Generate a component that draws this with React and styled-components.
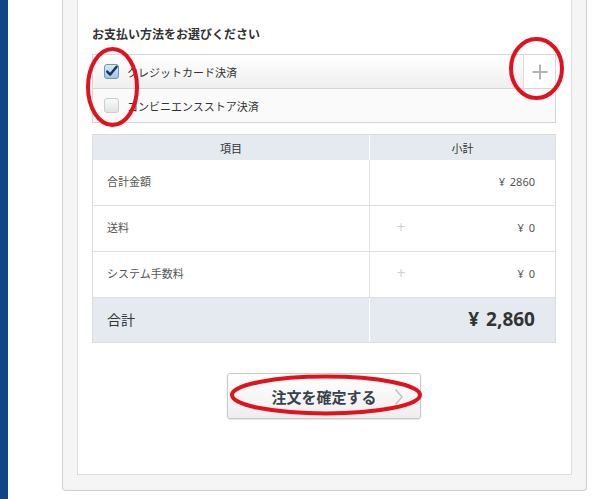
import React from 'react'
import styled, { createGlobalStyle } from 'styled-components'

const Global = createGlobalStyle`
  html, body {
    margin: 0;
    padding: 0;
    background: #fff;
  }
  body {
    font-family: "Noto Sans CJK JP", "Noto Sans", sans-serif;
    color: #333;
  }
`

const Page = styled.div`
  position: relative;
  display: flex;
  height: 499px;
  overflow: hidden;
`

const SideBar = styled.div`
  width: 8px;
  flex: none;
  background: #0d4586;
`

const Main = styled.div`
  padding-left: 54px;
`

const OuterPanel = styled.div`
  box-sizing: border-box;
  width: 525px;
  border: 1px solid #cfcfcf;
  border-top: none;
  border-radius: 0 0 4px 4px;
  background: #f5f5f5;
  padding: 0 14px 15px;
`

const InnerPanel = styled.div`
  border: 1px solid #dcdcdc;
  border-top: none;
  background: #fff;
  padding: 27px 15px 55px 14px;
`

const Heading = styled.div`
  font-size: 12px;
  line-height: 14px;
  font-weight: bold;
  color: #333;
  margin-bottom: 13px;
`

const PayBox = styled.div`
  border: 1px solid #d6d6d6;
`

const PayRow = styled.div`
  display: flex;
  align-items: center;
  height: 33px;
  background: ${p => (p.$raised ? 'linear-gradient(#ffffff, #efefef)' : '#fafafa')};
  border-top: ${p => (p.$first ? 'none' : '1px solid #d6d6d6')};
`

const PayLabel = styled.label`
  display: flex;
  align-items: center;
  gap: 7px;
  flex: 1;
  padding-left: 10px;
  font-size: 11px;
  color: #333;
`

const AddButton = styled.div`
  width: 31px;
  align-self: stretch;
  display: flex;
  align-items: center;
  justify-content: center;
  border-left: 1px solid #dcdcdc;
  background: #fff;
`

const Table = styled.div`
  margin-top: 11px;
  border: 1px solid #dcdcdc;
  display: grid;
  grid-template-columns: 276px 1fr;
`

const Cell = styled.div`
  display: flex;
  align-items: center;
  height: ${p => p.$h}px;
  background: ${p => (p.$shade ? '#e5eaf0' : '#fff')};
  border-bottom: ${p => (p.$line ? '1px solid #dedede' : 'none')};
  border-left: ${p => (p.$right ? `1px solid ${p.$shade ? '#fff' : '#e2e2e2'}` : 'none')};
  justify-content: ${p => p.$align || 'flex-start'};
  padding: 0 ${p => (p.$right ? 20 : 0)}px 3px ${p => (p.$right ? 0 : 14)}px;
  box-sizing: border-box;
  font-size: ${p => p.$size || 11}px;
  font-weight: ${p => (p.$bold ? 'bold' : 'normal')};
  color: ${p => (p.$dark ? '#333' : '#555')};
`

const HeadCell = styled.div`
  height: 25px;
  display: flex;
  align-items: center;
  justify-content: center;
  background: #e5eaf0;
  font-size: 11px;
  color: #333;
  border-left: ${p => (p.$right ? '1px solid #fff' : 'none')};
`

const Plus = styled.span`
  margin-left: 26px;
  margin-right: auto;
  color: #cfcfcf;
  font-size: 12px;
  font-family: "DejaVu Sans", sans-serif;
`

const Amount = styled.span`
  font-family: "Noto Sans", "Noto Sans CJK JP", sans-serif;
  word-spacing: 2px;
`

const ButtonWrap = styled.div`
  display: flex;
  justify-content: center;
  margin-top: 30px;
`

const ConfirmButton = styled.button`
  position: relative;
  box-sizing: border-box;
  width: 194px;
  height: 46px;
  border: 1px solid #c9c9c9;
  border-radius: 3px;
  background: linear-gradient(#ffffff, #eeeeee);
  box-shadow: 0 1px 2px rgba(0, 0, 0, 0.12);
  font-family: "Noto Sans CJK JP", sans-serif;
  font-size: 15px;
  font-weight: bold;
  color: #39414d;
  display: flex;
  align-items: center;
  justify-content: center;
  padding: 0;
`

const Chevron = styled.svg`
  position: absolute;
  right: 16px;
  top: 14px;
`

const Marks = styled.svg`
  position: absolute;
  left: 0;
  top: 0;
  pointer-events: none;
`

function CheckBox({ checked }) {
  return (
    <svg width="17" height="17" viewBox="0 0 17 17">
      <defs>
        <linearGradient id="cbOn" x1="0" y1="0" x2="0" y2="1">
          <stop offset="0" stopColor="#dbeaf8" />
          <stop offset="1" stopColor="#9fc4e8" />
        </linearGradient>
        <linearGradient id="cbOff" x1="0" y1="0" x2="0" y2="1">
          <stop offset="0" stopColor="#fbfbfb" />
          <stop offset="1" stopColor="#e2e2e2" />
        </linearGradient>
      </defs>
      <rect
        x="1.5"
        y="1.5"
        width="14"
        height="14"
        rx="2.5"
        fill={checked ? 'url(#cbOn)' : 'url(#cbOff)'}
        stroke={checked ? '#7295bb' : '#cdcdcd'}
      />
      {checked && (
        <path d="M4.2 8.6 L7.2 11.6 L13.6 3.8" fill="none" stroke="#1c3556" strokeWidth="2.4" strokeLinecap="round" strokeLinejoin="round" />
      )}
    </svg>
  )
}

const rows = [
  { label: '合計金額', value: '¥ 2860', plus: false },
  { label: '送料', value: '¥ 0', plus: true },
  { label: 'システム手数料', value: '¥ 0', plus: true },
]

export default function App() {
  return (
    <Page>
      <Global />
      <SideBar />
      <Main>
        <OuterPanel>
          <InnerPanel>
            <Heading>お支払い方法をお選びください</Heading>
            <PayBox>
              <PayRow $raised $first>
                <PayLabel>
                  <CheckBox checked />
                  クレジットカード決済
                </PayLabel>
                <AddButton>
                  <svg width="18" height="18" viewBox="0 0 18 18">
                    <path d="M9 1.5 V16.5 M1.5 9 H16.5" stroke="#b4b4b4" strokeWidth="2" />
                  </svg>
                </AddButton>
              </PayRow>
              <PayRow>
                <PayLabel>
                  <CheckBox />
                  コンビニエンスストア決済
                </PayLabel>
              </PayRow>
            </PayBox>

            <Table>
              <HeadCell>項目</HeadCell>
              <HeadCell $right>小計</HeadCell>
              {rows.map(r => (
                <React.Fragment key={r.label}>
                  <Cell $h={46} $line>{r.label}</Cell>
                  <Cell $h={46} $line $right $align="flex-end">
                    {r.plus && <Plus>+</Plus>}
                    <Amount>{r.value}</Amount>
                  </Cell>
                </React.Fragment>
              ))}
              <Cell $h={44} $shade $size={14} $dark>合計</Cell>
              <Cell $h={44} $shade $right $align="flex-end" $size={19} $bold $dark>
                <Amount>¥ 2,860</Amount>
              </Cell>
            </Table>

            <ButtonWrap>
              <ConfirmButton type="button">
                注文を確定する
                <Chevron width="10" height="18" viewBox="0 0 10 18">
                  <path d="M1.5 1.5 L8 9 L1.5 16.5" fill="none" stroke="#c4c4c4" strokeWidth="1.6" />
                </Chevron>
              </ConfirmButton>
            </ButtonWrap>
          </InnerPanel>
        </OuterPanel>
      </Main>

      <Marks width="608" height="499" viewBox="0 0 608 499">
        <g fill="none" stroke="#e2121c" strokeWidth="4">
          <ellipse cx="112.5" cy="87" rx="24.5" ry="38" />
          <ellipse cx="536.5" cy="68.5" rx="25.5" ry="29.5" />
          <ellipse cx="326" cy="395" rx="94" ry="18.5" />
        </g>
      </Marks>
    </Page>
  )
}
